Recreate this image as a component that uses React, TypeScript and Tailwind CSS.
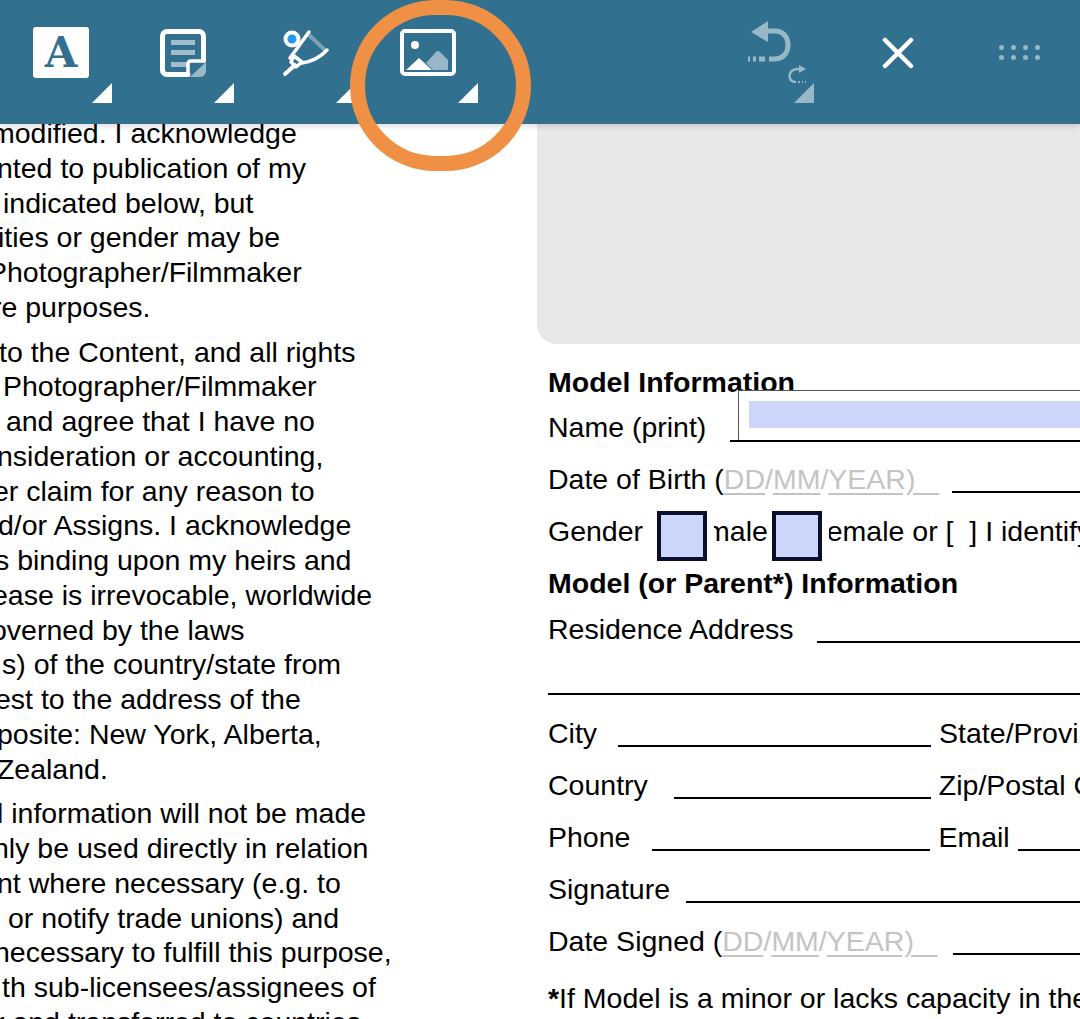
import React from 'react';

const Corner = ({ dim = false }: { dim?: boolean }) => (
  <svg width="20" height="20" viewBox="0 0 20 20" className={dim ? 'opacity-50' : ''}>
    <path d="M20 0V20H0Z" fill="#fff" />
  </svg>
);

const TextIcon = () => (
  <div className="w-[56px] h-[51px] bg-white rounded-[3px] flex items-center justify-center font-['DejaVu_Serif',serif] font-bold text-[42px] leading-none text-[#31708f]">
    A
  </div>
);

const NoteIcon = () => (
  <svg width="46" height="48" viewBox="0 0 46 48">
    <path d="M7 2.5H39A4.5 4.5 0 0 1 43.5 7V31M28 45.5H7A4.5 4.5 0 0 1 2.5 41V7A4.5 4.5 0 0 1 7 2.5" fill="none" stroke="#fff" strokeWidth="5" strokeLinecap="round" />
    <rect x="11" y="11" width="24" height="5" fill="#fff" opacity="0.55" />
    <rect x="11" y="21" width="24" height="5" fill="#fff" opacity="0.55" />
    <rect x="11" y="33" width="16" height="5" fill="#fff" opacity="0.55" />
    <path d="M28 45.5V35Q28 32 31 32H44" fill="none" stroke="#fff" strokeWidth="3.5" strokeLinecap="round" />
    <path d="M30 48L46 33V42A6 6 0 0 1 40 48Z" fill="#fff" opacity="0.5" />
  </svg>
);

const DrawIcon = () => (
  <svg width="50" height="50" viewBox="0 0 50 50">
    <path d="M26 6L42 21" fill="none" stroke="#fff" strokeWidth="4" opacity="0.35" />
    <path d="M26 3L7 29M44 21Q34 32 19 34" fill="none" stroke="#fff" strokeWidth="3.5" strokeLinecap="round" />
    <path d="M11 27L19 33L13 38L8 33Z" fill="none" stroke="#fff" strokeWidth="3.5" strokeLinejoin="round" />
    <path d="M2 45L12 36" stroke="#fff" strokeWidth="4" strokeLinecap="round" />
    <circle cx="9" cy="10" r="6.5" fill="#2196f3" stroke="#fff" strokeWidth="4" />
  </svg>
);

const ImageIcon = () => (
  <svg width="56" height="47" viewBox="0 0 56 47">
    <rect x="2" y="2" width="52" height="43" rx="3" fill="none" stroke="#fff" strokeWidth="4" />
    <circle cx="15" cy="16" r="4" fill="#fff" />
    <path d="M26 34L36 23Q38 21 40 23L48 31V41H33Z" fill="#fff" opacity="0.5" />
    <path d="M6 41L19 29L32 41Z" fill="#fff" />
  </svg>
);

const UndoIcon = () => (
  <svg width="64" height="66" viewBox="0 0 64 66" className="opacity-50">
    <path d="M20 0V21L3 11Z" fill="#fff" />
    <path d="M18 10H27C35 10 40 16 40 24C40 33 34 38 26 38H21" fill="none" stroke="#fff" strokeWidth="5" />
    <path d="M0 38H2M5 38H8M11 38H17" stroke="#fff" strokeWidth="5" fill="none" />
    <path d="M54 48H49C44 48 41.5 52 41.5 55C41.5 59 44 61 48 61" fill="none" stroke="#fff" strokeWidth="2.5" />
    <path d="M51 44V52L58 48Z" fill="#fff" />
    <path d="M50 61H52M54 61H55M57 61H58" stroke="#fff" strokeWidth="2" />
  </svg>
);

const CloseIcon = () => (
  <svg width="32" height="32" viewBox="0 0 32 32">
    <path d="M3 3L29 29M29 3L3 29" stroke="#fff" strokeWidth="4.5" strokeLinecap="round" />
  </svg>
);

const DotsIcon = () => (
  <div className="grid grid-cols-4 gap-x-[7px] gap-y-[5px]">
    {Array.from({ length: 8 }).map((_, i) => (
      <div key={i} className="w-[5px] h-[5px] rounded-full bg-white/50" />
    ))}
  </div>
);

const Toolbar = () => (
  <div className="relative z-10 h-[124px] bg-[#31708f] shrink-0 flex shadow-[0_2px_6px_rgba(0,0,0,0.15)]">
    <div className="w-[122px] pl-[33px] pt-[27px] relative">
      <TextIcon />
      <div className="absolute left-[92px] top-[83px]"><Corner /></div>
    </div>
    <div className="w-[122px] pl-[38px] pt-[29px] relative">
      <NoteIcon />
      <div className="absolute left-[92px] top-[83px]"><Corner /></div>
    </div>
    <div className="w-[122px] pl-[39px] pt-[29px] relative">
      <DrawIcon />
      <div className="absolute left-[92px] top-[83px]"><Corner /></div>
    </div>
    <div className="w-[122px] pl-[34px] pt-[29px] relative">
      <ImageIcon />
      <div className="absolute left-[92px] top-[83px]"><Corner /></div>
    </div>
    <div className="w-[344px] pt-[21px] relative flex justify-end pr-[20px]">
      <UndoIcon />
      <div className="absolute left-[306px] top-[83px]"><Corner dim /></div>
    </div>
    <div className="pl-[50px] pt-[37px]"><CloseIcon /></div>
    <div className="pl-[85px] pt-[45px]"><DotsIcon /></div>
    {/* orange highlight ring */}
    <div className="absolute left-[350px] top-0 w-[181px] h-[171px] rounded-full border-[15px] border-[#f09044]" />
  </div>
);

// each line is offset a little because the page is cropped on the left
const paragraphs: [string, string][][] = [
  [
    ['modified. I acknowledge', '-ml-[9px]'],
    ['nted to publication of my', '-ml-[3px]'],
    ['indicated below, but', 'ml-[3px]'],
    ['ities or gender may be', '-ml-[2px]'],
    ['Photographer/Filmmaker', '-ml-[12px]'],
    ['re purposes.', '-ml-[8px]'],
  ],
  [
    ['to the Content, and all rights', '-ml-[1px]'],
    [' Photographer/Filmmaker', '-ml-[5px]'],
    [' and agree that I have no', '-ml-[2px]'],
    ['nsideration or accounting,', '-ml-[3px]'],
    ['er claim for any reason to', '-ml-[7px]'],
    ['d/or Assigns. I acknowledge', '-ml-[2px]'],
    ['s binding upon my heirs and', '-ml-[5px]'],
    ['ease is irrevocable, worldwide', '-ml-[8px]'],
    ['overned by the laws', '-ml-[9px]'],
    ['s) of the country/state from', 'ml-[2px]'],
    ['est to the address of the', '-ml-[5px]'],
    ['posite: New York, Alberta,', '-ml-[3px]'],
    [' Zealand.', '-ml-[11px]'],
  ],
  [
    ['l information will not be made', '-ml-[3px]'],
    ['nly be used directly in relation', '-ml-[7px]'],
    ['nt where necessary (e.g. to', '-ml-[3px]'],
    [' or notify trade unions) and', ''],
    ['necessary to fulfill this purpose,', '-ml-[6px]'],
    ['th sub-licensees/assignees of', 'ml-[2px]'],
    ['r and transferred to countries', '-ml-[5px]'],
  ],
];

const Line = () => <div className="flex-1 border-b-2 border-black mb-[3px]" />;

const FixedLine = ({ className }: { className: string }) => (
  <div className={`shrink-0 border-b-2 border-black mb-[3px] ${className}`} />
);

const Row = ({ children, className = '' }: { children: React.ReactNode; className?: string }) => (
  <div className={`h-[52px] flex items-end whitespace-nowrap leading-[34px] ${className}`}>{children}</div>
);

const DateHint = () => (
  <span className="shrink-0 text-[#c4c4c4]">
    <span className="underline underline-offset-[4px]">DD</span>/<span className="underline underline-offset-[4px]">MM</span>/<span className="underline underline-offset-[4px]">YEAR)&nbsp;&nbsp;&nbsp;</span>
  </span>
);

const Checkbox = ({ className }: { className: string }) => (
  <div className={`absolute w-[50px] h-[50px] bg-[#ccd6fb] border-[4px] border-[#0b0f2b] shadow-[7px_0_0_#fff] ${className}`} />
);

const FormColumn = () => (
  <div className="relative flex-1 overflow-hidden">
    <div className="h-[220px] bg-[#e8e8e8] rounded-bl-[20px]" />
    <div className="pl-[11px]">
      <div className="h-[34px] mt-[21px] font-bold leading-[34px] whitespace-nowrap">Model Information</div>
      <Row className="!h-[45px]"><span>Name (print)</span></Row>
      <Row>
        <span>Date of Birth (</span><DateHint /><span className="w-[13px] shrink-0" /><Line />
      </Row>
      <Row>
        <span>Gender</span><span className="w-[63px] shrink-0" /><span>male</span><span className="w-[51px] shrink-0" /><span>female or [ &nbsp;] I identify</span>
      </Row>
      <Row className="font-bold">Model (or Parent*) Information</Row>
      <Row className="!h-[46px]"><span>Residence Address</span><span className="w-[23px] shrink-0" /><Line /></Row>
      <Row><Line /></Row>
      <Row>
        <span>City</span><span className="w-[21px] shrink-0" /><FixedLine className="w-[313px]" /><span className="ml-[8px]">State/Province</span>
      </Row>
      <Row>
        <span>Country</span><span className="w-[26px] shrink-0" /><FixedLine className="w-[257px]" /><span className="ml-[8px]">Zip/Postal Code</span>
      </Row>
      <Row>
        <span>Phone</span><span className="w-[22px] shrink-0" /><FixedLine className="w-[278px]" /><span className="ml-[8px]">Email</span><span className="w-[8px] shrink-0" /><Line />
      </Row>
      <Row><span>Signature</span><span className="w-[16px] shrink-0" /><Line /></Row>
      <Row>
        <span>Date Signed (</span><DateHint /><span className="w-[15px] shrink-0" /><Line />
      </Row>
      <Row className="!h-[57px]"><span><b>*</b>If Model is a minor or lacks capacity in the</span></Row>
    </div>
    {/* form field overlays */}
    <div className="absolute left-[201px] top-[266px] right-0 h-[50px] bg-white border-t border-l border-[#555] pt-[10px] pl-[10px]">
      <div className="h-[27px] bg-[#ccd6fb]" />
    </div>
    <div className="absolute left-[193px] top-[316px] right-0 h-[2px] bg-black" />
    <Checkbox className="left-[120px] top-[387px]" />
    <Checkbox className="left-[235px] top-[387px]" />
  </div>
);

export default function App() {
  return (
    <div className="w-[1080px] h-[1019px] overflow-hidden bg-white flex flex-col font-['Liberation_Sans',Arial,sans-serif] text-[28.5px] text-black">
      <Toolbar />
      <div className="flex flex-1 min-h-0">
        <div className="w-[537px] shrink-0 overflow-hidden">
          <div className="-mt-[8px] flex flex-col gap-[10px]">
            {paragraphs.map((lines, i) => (
              <div key={i}>
                {lines.map(([t, offset]) => (
                  <div key={t} className={`h-[34.75px] leading-[34.75px] whitespace-pre ${offset}`}>{t}</div>
                ))}
              </div>
            ))}
          </div>
        </div>
        <FormColumn />
      </div>
    </div>
  );
}
